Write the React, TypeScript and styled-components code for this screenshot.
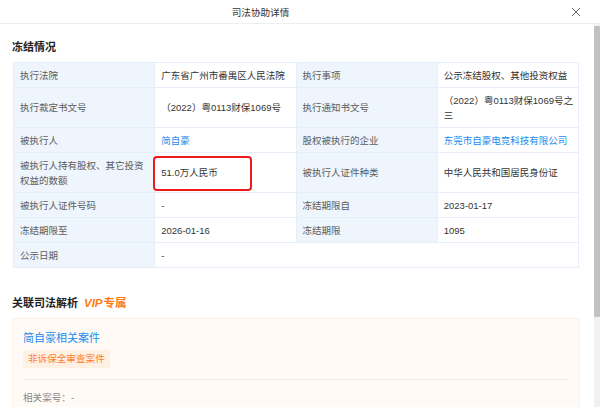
import { Fragment } from "react";
import type { ReactNode } from "react";
import styled, { createGlobalStyle } from "styled-components";

const GlobalStyle = createGlobalStyle`
  html, body {
    margin: 0;
    padding: 0;
    background: #ffffff;
  }
  body {
    font-family: "Liberation Sans", "Noto Sans CJK SC", sans-serif;
    color: #333;
  }
`;

const Dialog = styled.div`
  width: 600px;
  height: 407px;
  display: flex;
  flex-direction: column;
  overflow: hidden;
  background: #fff;
`;

const Header = styled.div`
  height: 24px;
  flex-shrink: 0;
  display: flex;
  align-items: center;
  padding-right: 19px;
  border-bottom: 1px solid #eeeeee;
  box-sizing: border-box;
`;

const Title = styled.div`
  flex: 1;
  margin-right: 50px;
  text-align: center;
  font-size: 9.6px;
  color: #333;
`;

const CloseBtn = styled.button`
  width: 10px;
  height: 10px;
  padding: 0;
  border: none;
  background: transparent;
  display: flex;
  cursor: pointer;
`;

const Viewport = styled.div`
  flex: 1;
  min-height: 0;
  display: flex;
`;

const Body = styled.div`
  flex: 1;
  overflow: hidden;
  padding: 14px 15px 0 13px;
`;

// the content is taller than the dialog, so a scrollbar is drawn on the right
const ScrollTrack = styled.div`
  width: 6px;
  flex-shrink: 0;
  background: #f1f1f1;
  padding-top: 2px;
`;

const ScrollThumb = styled.div<{ $size: number }>`
  height: ${(p) => p.$size}px;
  background: #c1c1c1;
  border-radius: 1px;
`;

const SectionTitle = styled.div<{ $top?: number }>`
  display: flex;
  align-items: center;
  gap: 6px;
  margin-left: -1px;
  margin-top: ${(p) => p.$top ?? 0}px;
  margin-bottom: 8px;
  height: 16px;
  font-size: 11px;
  font-weight: bold;
  color: #222;
`;

const Vip = styled.span`
  color: #ff7a17;
  font-weight: bold;
  font-size: 11.5px;

  i {
    font-style: italic;
    font-weight: 900;
    margin-right: 1px;
  }
`;

const Table = styled.table`
  width: 566px;
  border-collapse: collapse;
  table-layout: fixed;
  font-size: 9.5px;
  line-height: 15px;
`;

const Label = styled.td`
  background: #eef5fd;
  color: #5c5c5c;
  padding: 4.5px 4px 4.5px 6px;
  border: 1px solid #e5eef9;
  vertical-align: middle;
`;

const Value = styled.td`
  position: relative;
  background: #fff;
  color: #333;
  padding: 4.5px 4px 4.5px 6px;
  border: 1px solid #e5eef9;
  vertical-align: middle;
`;

const Link = styled.a`
  color: #1a8bf0;
  text-decoration: none;
  cursor: pointer;
`;

const Highlight = styled.div`
  position: absolute;
  left: -2px;
  top: 3px;
  width: 99px;
  height: 35px;
  box-sizing: border-box;
  border: 2px solid #ec1c1c;
  border-radius: 4px;
  pointer-events: none;
`;

const Card = styled.div`
  width: 568px;
  margin-left: -1px;
  box-sizing: border-box;
  background: #fffaf6;
  border: 1px solid #fcefe5;
  padding: 11px 10px 30px 10px;
`;

const CaseLink = styled.div`
  font-size: 11px;
  line-height: 16px;
  color: #1a8bf0;
  cursor: pointer;
`;

const Tag = styled.span`
  display: inline-block;
  margin-top: 4px;
  padding: 0 5px;
  height: 18px;
  line-height: 18px;
  font-size: 9.6px;
  color: #ff7d2a;
  background: #fff0e4;
`;

const Divider = styled.div`
  margin: 11px 0 10px;
  height: 1px;
  background: #f8ece2;
`;

const Meta = styled.div`
  font-size: 9.6px;
  line-height: 16px;
  color: #888;
`;

type Cell = { label: string; value: ReactNode; span?: number; mark?: boolean };

const rows: Cell[][] = [
  [
    { label: "执行法院", value: "广东省广州市番禺区人民法院" },
    { label: "执行事项", value: "公示冻结股权、其他投资权益" },
  ],
  [
    { label: "执行裁定书文号", value: "（2022）粤0113财保1069号" },
    { label: "执行通知书文号", value: "（2022）粤0113财保1069号之三" },
  ],
  [
    { label: "被执行人", value: <Link>简自豪</Link> },
    { label: "股权被执行的企业", value: <Link>东莞市自豪电竞科技有限公司</Link> },
  ],
  [
    { label: "被执行人持有股权、其它投资权益的数额", value: "51.0万人民币", mark: true },
    { label: "被执行人证件种类", value: "中华人民共和国居民身份证" },
  ],
  [
    { label: "被执行人证件号码", value: "-" },
    { label: "冻结期限自", value: "2023-01-17" },
  ],
  [
    { label: "冻结期限至", value: "2026-01-16" },
    { label: "冻结期限", value: "1095" },
  ],
  [{ label: "公示日期", value: "-", span: 3 }],
];

export default function App() {
  return (
    <>
      <GlobalStyle />
      <Dialog>
        <Header>
          <Title>司法协助详情</Title>
          <CloseBtn aria-label="关闭">
            <svg width="10" height="10" viewBox="0 0 10 10">
              <path d="M1 1L9 9M9 1L1 9" stroke="#666" strokeWidth="1" />
            </svg>
          </CloseBtn>
        </Header>
        <Viewport>
          <Body>
            <SectionTitle>冻结情况</SectionTitle>
            <Table>
              <tbody>
                {rows.map((row, i) => (
                  <tr key={i}>
                    {row.map((c) => (
                      <Fragment key={c.label}>
                        <Label>{c.label}</Label>
                        <Value colSpan={c.span ?? 1}>
                          {c.value}
                          {c.mark && <Highlight />}
                        </Value>
                      </Fragment>
                    ))}
                  </tr>
                ))}
              </tbody>
            </Table>

            <SectionTitle $top={26}>
              关联司法解析
              <Vip>
                <i>VIP</i>专属
              </Vip>
            </SectionTitle>
            <Card>
              <CaseLink>简自豪相关案件</CaseLink>
              <Tag>非诉保全审查案件</Tag>
              <Divider />
              <Meta>相关案号：-</Meta>
            </Card>
          </Body>
          <ScrollTrack>
            <ScrollThumb $size={291} />
          </ScrollTrack>
        </Viewport>
      </Dialog>
    </>
  );
}
